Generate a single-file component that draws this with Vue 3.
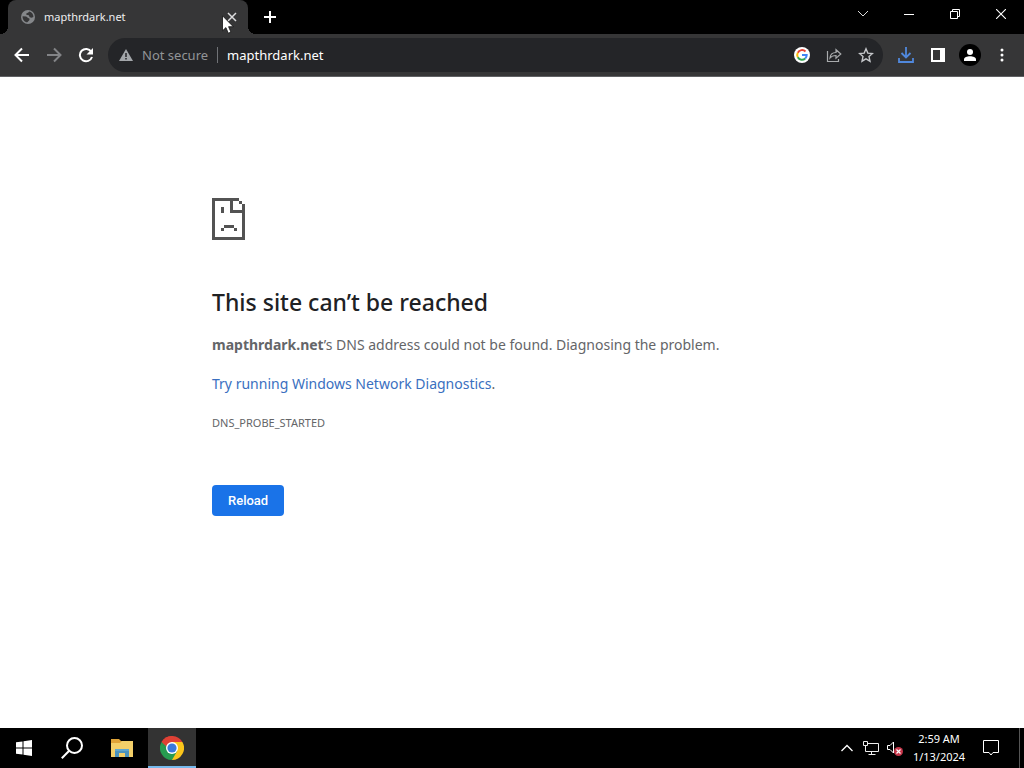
<script setup>
const host = 'mapthrdark.net'
</script>

<template>
  <div class="desktop">
    <header class="titlebar">
      <div class="tab">
        <svg class="globe" width="14" height="14" viewBox="0 0 14 14" aria-hidden="true">
          <circle cx="7" cy="7" r="7" fill="#85878a" />
          <path d="M1.600 6.200 5.200 6.600l1.900 1.500 1.500.7-.3 1.500-2 1.900C3.600 12.200 1.300 9.500 1.600 6.200ZM8.300 1.600 7.300 2.600 5.300 3.400v1.400l2.500.5.900 1.900 1.900.6 1.800-.7C12.600 4.700 10.900 2.100 8.300 1.600Z" fill="#363637" />
        </svg>
        <span class="tab-title">{{ host }}</span>
        <button class="tab-close" aria-label="Close tab">
          <svg width="10" height="10" viewBox="0 0 10 10"><path d="m1 1 8 8M9 1 1 9" stroke="#dddddf" stroke-width="1.500" /></svg>
        </button>
      </div>
      <button class="new-tab" aria-label="New tab">
        <svg width="12" height="12" viewBox="0 0 12 12"><path d="M6 0v12M0 6h12" stroke="#fff" stroke-width="2" /></svg>
      </button>
      <div class="window-buttons">
        <button aria-label="Search tabs"><svg width="12" height="12" viewBox="0 0 12 12"><path d="m1 3 5 5 5-5" fill="none" stroke="#ddd" /></svg></button>
        <button aria-label="Minimize"><svg width="10" height="10" viewBox="0 0 10 10"><path d="M0 5.500h10" stroke="#fff" /></svg></button>
        <button aria-label="Restore"><svg width="10" height="10" viewBox="0 0 10 10"><path d="M.5 2.500h7v7h-7zM2.500 2.500v-2h7v7h-2" fill="none" stroke="#fff" /></svg></button>
        <button aria-label="Close"><svg width="10" height="10" viewBox="0 0 10 10"><path d="m0 0 10 10M10 0 0 10" stroke="#fff" stroke-width="1.100" /></svg></button>
      </div>
    </header>

    <nav class="toolbar">
      <button class="tool" aria-label="Back">
        <svg width="16" height="16" viewBox="0 0 16 16"><path d="M15 8H2M8 1.500 1.500 8 8 14.500" fill="none" stroke="#fff" stroke-width="2" /></svg>
      </button>
      <button class="tool" aria-label="Forward">
        <svg width="16" height="16" viewBox="0 0 16 16"><path d="M1 8h13M8 1.500 14.500 8 8 14.500" fill="none" stroke="#838487" stroke-width="2" /></svg>
      </button>
      <button class="tool" aria-label="Reload page">
        <svg width="16" height="16" viewBox="0 0 16 16"><path d="M13.300 4.700A6.200 6.200 0 1 0 14 10" fill="none" stroke="#fff" stroke-width="2" /><path d="M15 1v6.500H8.500Z" fill="#fff" /></svg>
      </button>
      <div class="omnibox">
        <svg class="warning" width="14" height="12" viewBox="0 0 14 12" aria-hidden="true"><path d="M7 0 14 12H0Z" fill="#a3a6aa" /><path d="M7 4v4M7 9v1.500" stroke="#242528" stroke-width="1.500" /></svg>
        <span class="security">Not secure</span>
        <input class="url" aria-label="Address" :value="host" />
        <button class="tool" aria-label="Search with Google">
          <svg width="16" height="16" viewBox="0 0 16 16">
            <circle cx="8" cy="8" r="8" fill="#fff" />
            <g fill="none" stroke-width="2">
              <path d="M11.500 4.500A4.800 4.800 0 0 0 3.800 5.700" stroke="#ea4335" />
              <path d="M3.800 5.700a4.800 4.800 0 0 0 0 4.600" stroke="#fbbc05" />
              <path d="M3.800 10.300a4.800 4.800 0 0 0 7.400 1.200" stroke="#34a853" />
              <path d="M11.200 11.500A4.800 4.800 0 0 0 12.700 8H8" stroke="#4285f4" />
            </g>
          </svg>
        </button>
        <button class="tool" aria-label="Share this page">
          <svg width="16" height="16" viewBox="0 0 16 16"><path d="M1.500 4v10.500h11V12M4 11c.3-3.800 2.300-5.500 6-5.500V2.700L14.800 7 10 11.200V8.500C7.400 8.500 5.400 9.200 4 11Z" fill="none" stroke="#a9abad" stroke-width="1.200" /></svg>
        </button>
        <button class="tool" aria-label="Bookmark this page">
          <svg width="16" height="16" viewBox="0 0 16 16"><path d="m8 1.800 1.800 4.300 4.700.4L11 9.600l1 4.600-4-2.400-4 2.400 1-4.600-3.500-3.100 4.700-.4Z" fill="none" stroke="#c4c6c9" stroke-width="1.400" /></svg>
        </button>
      </div>
      <button class="tool" aria-label="Downloads">
        <svg width="16" height="16" viewBox="0 0 16 16"><path d="M8 0v10M3.500 6 8 10.500 12.500 6M1 11v4h14v-4" fill="none" stroke="#5088dc" stroke-width="1.800" /></svg>
      </button>
      <button class="tool" aria-label="Side panel">
        <svg width="14" height="14" viewBox="0 0 14 14"><path d="M0 0h14v14H0ZM2 2v10h7V2Z" fill="#fff" fill-rule="evenodd" /></svg>
      </button>
      <button class="tool" aria-label="Profile">
        <svg width="22" height="22" viewBox="0 0 22 22"><circle cx="11" cy="11" r="11" fill="#000" /><circle cx="11" cy="8" r="3" fill="#fff" /><path d="M5 17v-1.500c0-2 3-3.200 6-3.200s6 1.200 6 3.200V17Z" fill="#fff" /></svg>
      </button>
      <button class="tool" aria-label="Menu">
        <svg width="4" height="14" viewBox="0 0 4 14"><circle cx="2" cy="2" r="1.500" fill="#fff" /><circle cx="2" cy="7" r="1.500" fill="#fff" /><circle cx="2" cy="12" r="1.500" fill="#fff" /></svg>
      </button>
    </nav>

    <main class="page">
      <div class="message">
        <svg class="sad-page" width="33" height="42" viewBox="0 0 33 42" shape-rendering="crispEdges" aria-hidden="true">
          <path d="M0 0h27v3h3v3h3v36H0ZM3 3v36h27V15H18V3ZM21 3v9h9V6h-3V3ZM9 9h3v6H9ZM12 27h10v3H12ZM9 30h3v3H9ZM22 30h3v3h-3Z" fill="#535353" fill-rule="evenodd" />
        </svg>
        <h1>This site can’t be reached</h1>
        <p><strong>{{ host }}</strong>’s DNS address could not be found. Diagnosing the problem.</p>
        <p><a href="#">Try running Windows Network Diagnostics</a>.</p>
        <div class="code">DNS_PROBE_STARTED</div>
        <button class="reload">Reload</button>
      </div>
    </main>

    <footer class="taskbar">
      <button class="task" aria-label="Start">
        <svg width="16" height="16" viewBox="0 0 16 16"><path d="M0 2.300 6.500 1.400v6.100H0ZM7.500 1.200 16 0v7.500H7.500ZM0 8.500h6.500v6.100L0 13.700ZM7.500 8.500H16V16l-8.500-1.200Z" fill="#fff" /></svg>
      </button>
      <button class="task" aria-label="Search">
        <svg width="22" height="22" viewBox="0 0 22 22"><circle cx="13.500" cy="8.500" r="7.500" fill="none" stroke="#fff" stroke-width="2" /><path d="M8.200 13.800.8 21.200" stroke="#fff" stroke-width="2" /></svg>
      </button>
      <button class="task spaced" aria-label="File Explorer">
        <svg width="22" height="18" viewBox="0 0 22 18"><path d="M0 0h8l2 2h12v16H0Z" fill="#dfa338" /><path d="M0 4h9l2-2h11v16H0Z" fill="#f3cf69" /><path d="M4 10h14v8h-4v-4H8v4H4Z" fill="#4b93bd" /><path d="M4 10h14v2H4Z" fill="#5ea6cf" /></svg>
      </button>
      <button class="task spaced active" aria-label="Google Chrome">
        <svg width="24" height="24" viewBox="0 0 24 24">
          <path d="M12 12 1.600 6A12 12 0 0 1 22.400 6Z" fill="#df4135" />
          <path d="M12 12V6h10.400A12 12 0 0 1 12 24Z" fill="#fbc51b" />
          <path d="M12 12 17.200 15 12 24A12 12 0 0 1 1.600 6L6.800 15Z" fill="#279b50" />
          <path d="M1.600 6 6.800 15 12 6Z" fill="#279b50" />
          <path d="M1.600 6A12 12 0 0 1 12 0v12H6Z" fill="#df4135" />
          <path d="M1.600 6 6.800 15 7 11Z" fill="#279b50" />
          <circle cx="12" cy="12" r="6" fill="#fff" /><circle cx="12" cy="12" r="4.600" fill="#3979dc" />
        </svg>
      </button>
      <div class="tray">
        <button class="tray-icon" aria-label="Show hidden icons"><svg width="12" height="8" viewBox="0 0 12 8"><path d="m.5 7 5.500-5.500L11.500 7" fill="none" stroke="#fff" stroke-width="1.300" /></svg></button>
        <button class="tray-icon" aria-label="Network"><svg width="16" height="14" viewBox="0 0 16 14"><path d="M5 2.500h10.500v8H4M8.500 10.500v3M5.500 13.500h7M.5.500h4v4h-4zM2.500 4.500v6H5" fill="none" stroke="#eee" /></svg></button>
        <button class="tray-icon" aria-label="Volume"><svg width="16" height="16" viewBox="0 0 16 16"><path d="M.5 5.500H3L6.500 2v11L3 9.500H.5Z" fill="none" stroke="#fff" /><circle cx="11.500" cy="11.500" r="4.500" fill="#c6364a" /><path d="m9.500 9.500 4 4M13.500 9.500l-4 4" stroke="#fff" stroke-width="1.200" /></svg></button>
        <div class="clock"><span>2:59 AM</span><span>1/13/2024</span></div>
        <button class="notifications" aria-label="Notifications"><svg width="16" height="16" viewBox="0 0 16 16"><path d="M.5.500h15v12H10L8 15l-2-2.500H.5Z" fill="none" stroke="#fff" /></svg></button>
        <span class="show-desktop"></span>
      </div>
    </footer>

    <svg class="pointer" width="12" height="19" viewBox="0 0 12 19" aria-hidden="true"><path d="M.5.800v15l3.400-3.200 2.400 5.600 2.600-1.100-2.300-5.400h4.700Z" fill="#fff" stroke="#111" stroke-width=".8" /></svg>
  </div>
</template>

<style>
body {
  margin: 0;
}
</style>

<style scoped>
.desktop {
  position: relative;
  display: flex;
  flex-direction: column;
  min-height: 100vh;
  background: #fff;
  font-family: "Noto Sans", "Open Sans", sans-serif;
}
button {
  display: flex;
  align-items: center;
  justify-content: center;
  padding: 0;
  border: 0;
  background: none;
}
svg {
  flex: none;
}
.titlebar {
  display: flex;
  height: 34px;
  padding-left: 8px;
  background: #000;
}
.tab {
  position: relative;
  display: flex;
  align-items: center;
  box-sizing: border-box;
  width: 240px;
  padding: 0 8px 0 13px;
  border-radius: 8px 8px 0 0;
  background: #363637;
}
.tab::before,
.tab::after {
  content: "";
  position: absolute;
  bottom: 0;
  width: 8px;
  height: 8px;
}
.tab::before {
  right: 100%;
  background: radial-gradient(circle at 0 0, #000 8px, #363637 8px);
}
.tab::after {
  left: 100%;
  background: radial-gradient(circle at 100% 0, #000 8px, #363637 8px);
}
.tab-title {
  flex: 1;
  margin-left: 9px;
  color: #eeeff0;
  font-size: 11px;
  line-height: 16px;
}
.tab-close {
  width: 16px;
  height: 16px;
}
.new-tab {
  width: 28px;
  margin-left: 8px;
}
.window-buttons {
  display: flex;
  height: 28px;
  margin-left: auto;
}
.window-buttons button {
  width: 46px;
}
.toolbar {
  display: flex;
  align-items: center;
  height: 42px;
  padding: 0 6px;
  border-bottom: 1px solid #606164;
  background: #363637;
}
.tool {
  flex: none;
  width: 32px;
  height: 32px;
}
.omnibox {
  display: flex;
  flex: 1;
  align-items: center;
  box-sizing: border-box;
  min-width: 0;
  height: 34px;
  margin: 0 7px 0 6px;
  padding: 0 1px 0 11px;
  border-radius: 17px;
  background: #242528;
  font-size: 13px;
}
.security {
  margin-left: 9px;
  padding-right: 9px;
  border-right: 1px solid #707276;
  color: #929497;
  line-height: 16px;
  white-space: nowrap;
}
.url {
  flex: 1;
  min-width: 0;
  padding: 0 0 0 9px;
  border: 0;
  outline: 0;
  background: none;
  color: #fff;
  font: inherit;
}
.page {
  flex: 1;
}
.message {
  max-width: 600px;
  margin: 0 auto;
  padding-top: 121px;
  color: #646568;
  font-size: 14px;
  line-height: 24px;
}
.sad-page {
  display: block;
}
h1 {
  margin: 46px 0 15px;
  color: #202124;
  font-size: 23px;
  font-weight: 500;
  line-height: 32px;
}
p {
  margin: 0 0 15px;
}
a {
  color: #3a6fc0;
  text-decoration: none;
}
.code {
  font-size: 11px;
}
.reload {
  margin-top: 50px;
  padding: 0 16px;
  border-radius: 4px;
  background: #1a73e8;
  color: #fff;
  font-family: Roboto, sans-serif;
  font-size: 13px;
  font-weight: 500;
  line-height: 31px;
}
.taskbar {
  display: flex;
  height: 40px;
  background: #000;
}
.task {
  box-sizing: border-box;
  width: 48px;
}
.spaced {
  margin-left: 2px;
}
.active {
  padding-top: 2px;
  border-bottom: 2px solid #76b9ed;
  background: #333;
}
.tray {
  display: flex;
  align-items: center;
  margin-left: auto;
}
.tray-icon {
  width: 24px;
  height: 40px;
}
.clock {
  display: flex;
  flex-direction: column;
  align-items: center;
  width: 64px;
  color: #fff;
  font-size: 11px;
  line-height: 18px;
}
.notifications {
  width: 40px;
  height: 40px;
}
.show-desktop {
  width: 4px;
  height: 40px;
  margin-left: 8px;
  border-left: 1px solid #555;
}
.pointer {
  position: absolute;
  top: 15px;
  left: 222px;
}
</style>
